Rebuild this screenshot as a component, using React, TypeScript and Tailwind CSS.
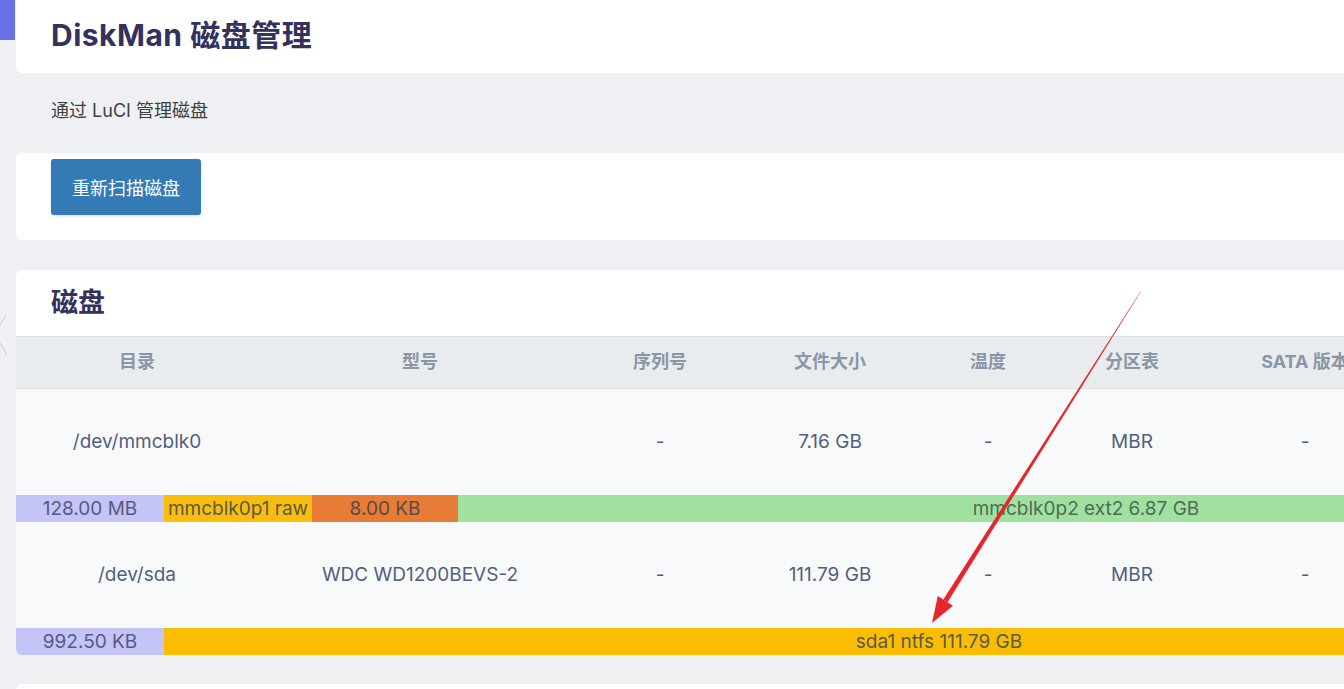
const headers = ["目录", "型号", "序列号", "文件大小", "温度", "分区表", "SATA 版本", "健康", "状态"];

const disks = [
  {
    path: "/dev/mmcblk0",
    model: "",
    serial: "-",
    size: "7.16 GB",
    temp: "-",
    table: "MBR",
    sata: "-",
    parts: [
      { label: "128.00 MB", w: 148, color: "bg-[#c4c4f6]", text: "text-[#555b80]" },
      { label: "mmcblk0p1 raw", w: 148, color: "bg-[#f9bd0b]", text: "text-[#5a5a4a]" },
      { label: "8.00 KB", w: 146, color: "bg-[#e97c35]", text: "text-[#5a4a4a]" },
      { label: "mmcblk0p2 ext2 6.87 GB", w: 1256, color: "bg-[#a1e1a0]", text: "text-[#4f6a5a]" },
    ],
  },
  {
    path: "/dev/sda",
    model: "WDC WD1200BEVS-2",
    serial: "-",
    size: "111.79 GB",
    temp: "-",
    table: "MBR",
    sata: "-",
    parts: [
      { label: "992.50 KB", w: 148, color: "bg-[#c4c4f6]", text: "text-[#555b80]" },
      { label: "sda1 ntfs 111.79 GB", w: 1550, color: "bg-[#fbbd02]", text: "text-[#5a5a4a]" },
    ],
  },
];

const cols = "grid grid-cols-[242px_324px_156px_184px_132px_156px_190px_157px_157px]";

export default function App() {
  return (
    <div className="relative w-[1344px] h-[689px] overflow-hidden bg-[#eef0f3] font-['Inter','Noto_Sans_CJK_SC',sans-serif]">
      <div className="flex">
        {/* left gutter */}
        <div className="w-4 shrink-0">
          <div className="h-10 w-[15px] bg-[#6672e4]" />
          <svg className="mt-[272px]" width="16" height="50" viewBox="0 0 16 50">
            <path d="M6 3 L0 13 M0 31 L7 43" stroke="#c9ccd2" strokeWidth="1" fill="none" />
          </svg>
        </div>

        <div className="w-[1698px] shrink-0 flex flex-col">
          <div className="h-[73px] bg-white rounded-b-md flex items-center pl-[35px] pb-[3px]">
            <h1 className="text-[30px] font-bold text-[#32325d] tracking-[0.5px]">DiskMan 磁盘管理</h1>
          </div>

          <div className="h-[80px] flex items-center pl-[35px] pb-[6px] text-[18px] text-[#404040]">
            通过 LuCI 管理磁盘
          </div>

          <div className="h-[87px] bg-white rounded-md pl-[35px] pt-[6px]">
            <button className="w-[150px] h-[56px] rounded-[3px] bg-[#337ab7] text-white text-[18px] font-['Noto_Sans_CJK_SC',sans-serif] shadow-sm">
              重新扫描磁盘
            </button>
          </div>

          <div className="mt-[30px] bg-white rounded-md overflow-hidden">
            <div className="h-[66px] flex items-center pl-[35px]">
              <h2 className="text-[27px] font-bold text-[#32325d]">磁盘</h2>
            </div>

            <div className={`${cols} h-[53px] items-center bg-[#e9ecef] border-y border-[#dde0e4] text-[18px] font-bold text-[#8a96a6] pb-[3px]`}>
              {headers.map((h) => (
                <div key={h} className="text-center">{h}</div>
              ))}
            </div>

            {disks.map((d) => (
              <div key={d.path}>
                <div className={`${cols} h-[106px] items-center bg-[#f8f9fa] text-[19px] text-[#525f7f]`}>
                  <div className="text-center">{d.path}</div>
                  <div className="text-center">{d.model}</div>
                  <div className="text-center">{d.serial}</div>
                  <div className="text-center">{d.size}</div>
                  <div className="text-center">{d.temp}</div>
                  <div className="text-center">{d.table}</div>
                  <div className="text-center">{d.sata}</div>
                  <div />
                  <div />
                </div>
                <div className="flex h-[27px] text-[19px] leading-[27px]">
                  {d.parts.map((p) => (
                    <div
                      key={p.label}
                      className={`${p.color} ${p.text} text-center whitespace-nowrap overflow-hidden`}
                      style={{ width: p.w }}
                    >
                      {p.label}
                    </div>
                  ))}
                </div>
              </div>
            ))}
          </div>

          <div className="mt-[29px] h-[40px] bg-white rounded-md" />
        </div>
      </div>

      {/* red annotation arrow */}
      <svg className="absolute left-0 top-0 pointer-events-none" width="1344" height="689" viewBox="0 0 1344 689">
        <polygon
          points="1141.2,291.1 1140.8,290.9 943.3,599.6 947.5,602.2"
          fill="#e8262a"
        />
        <polygon points="932,623 937.8,596.1 953,605.7" fill="#e8262a" />
      </svg>
    </div>
  );
}
